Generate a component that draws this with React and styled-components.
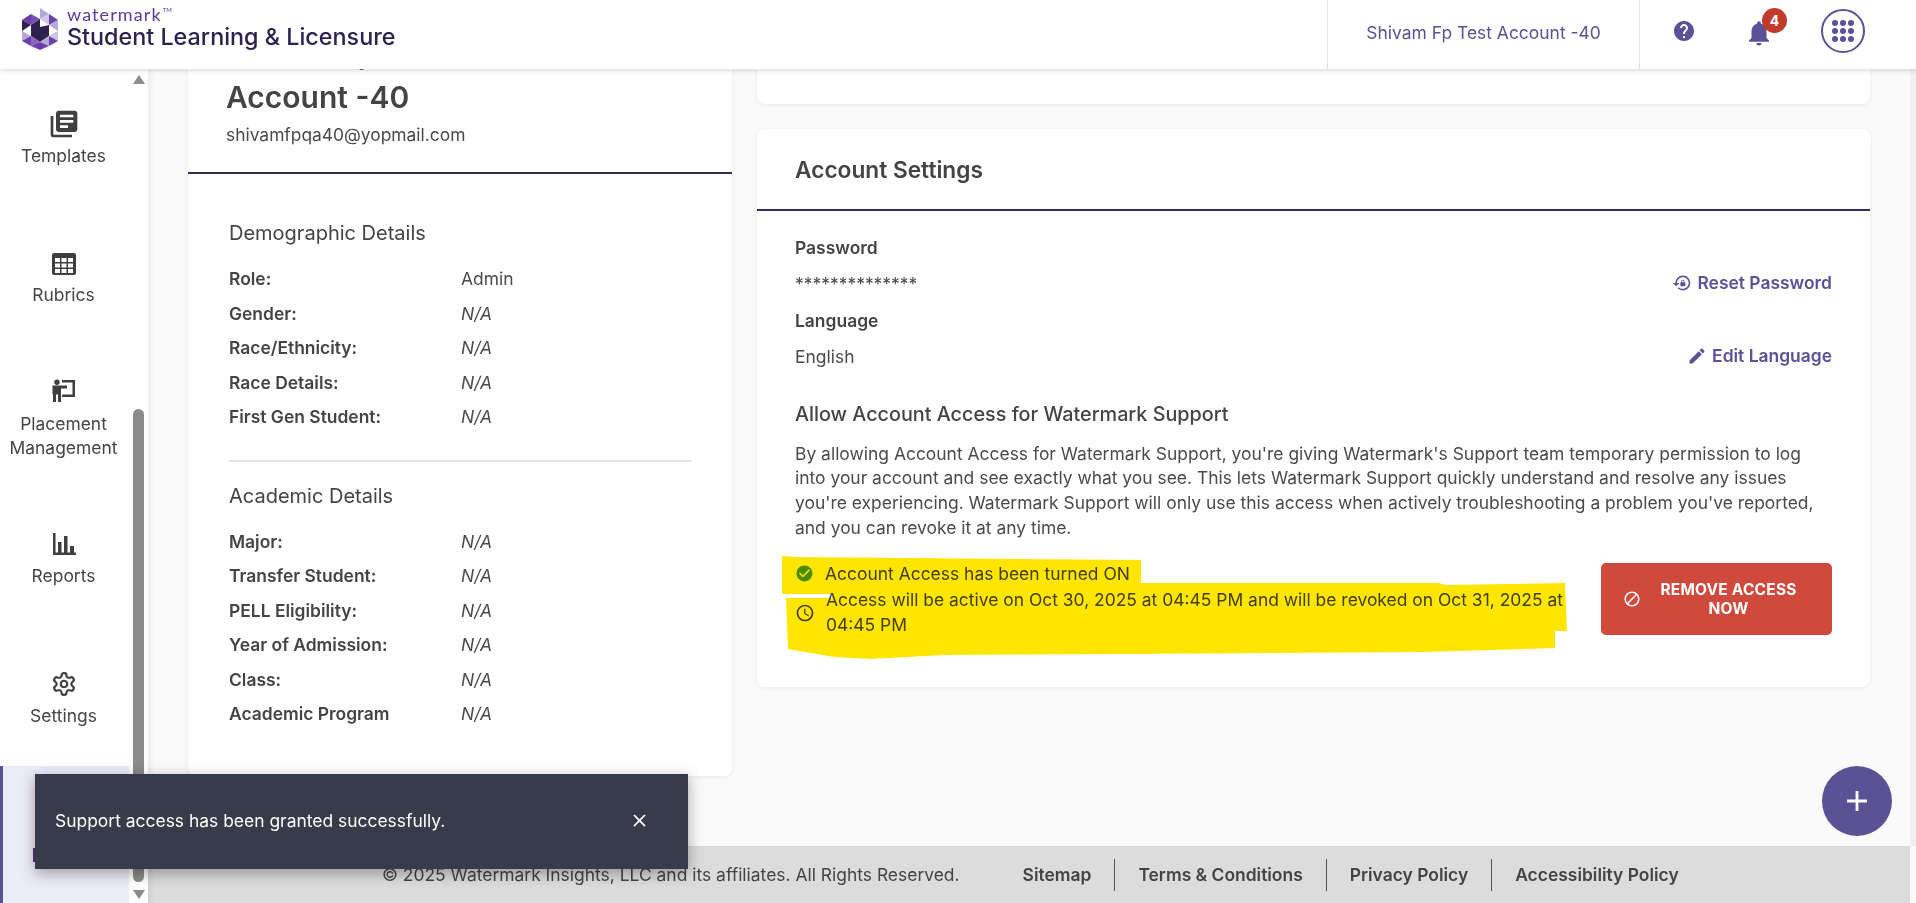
import React from "react";
import styled, { createGlobalStyle } from "styled-components";
import { MdLibraryBooks, MdHelp, MdNotifications, MdCheckCircle, MdEdit, MdBlock, MdLockReset, MdClose, MdAdd, MdAccessTime } from "react-icons/md";
import { LuSettings } from "react-icons/lu";

const Global = createGlobalStyle`
  html, body { margin: 0; padding: 0; height: 100%; overflow: hidden; background: #fafafa; }
  * { box-sizing: border-box; }
  body { font-family: Inter, "Liberation Sans", sans-serif; color: #4a4a4a; }
`;

const Page = styled.div`
  height: 903px;
  display: flex;
  flex-direction: column;
  position: relative;
  overflow: hidden;
`;

const Header = styled.header`
  height: 69px;
  flex: none;
  display: flex;
  align-items: stretch;
  background: #fff;
  box-shadow: 0 1px 5px rgba(0,0,0,.18);
  position: relative;
  z-index: 3;
`;
const Brand = styled.div`
  flex: 1;
  display: flex;
  gap: 9px;
  padding: 8px 0 0 22px;
`;
const BrandText = styled.div`
  display: flex;
  flex-direction: column;
  margin-top: -2px;
`;
const BrandTop = styled.span`
  font-family: Lato, Inter, sans-serif;
  font-size: 18px;
  line-height: 17px;
  letter-spacing: 1.1px;
  color: #5c3a9e;
  sup { font-size: 6px; line-height: 0; vertical-align: 9px; letter-spacing: 0; margin-left: 1px; }
`;
const BrandName = styled.span`
  font-size: 23.35px;
  line-height: 28px;
  font-weight: 500;
  color: #2d2150;
  white-space: nowrap;
`;
const Account = styled.div`
  width: 313px;
  border-left: 1px solid #e4e4e4;
  border-right: 1px solid #e4e4e4;
  display: flex;
  align-items: center;
  justify-content: center;
  padding-bottom: 5px;
  font-size: 17.45px;
  color: #5a5196;
  white-space: nowrap;
`;
const Tools = styled.div`
  width: 276px;
  display: flex;
  align-items: center;
  color: #5a5196;
  padding: 0 0 8px 32px;
`;
const BellWrap = styled.div`
  position: relative;
  display: flex;
  margin: 4px 0 0 48px;
`;
const Badge = styled.span`
  position: absolute;
  left: 18px;
  top: -10px;
  width: 25px;
  height: 25px;
  border-radius: 50%;
  background: #c23a2b;
  color: #fff;
  font-size: 14px;
  font-weight: 700;
  display: flex;
  align-items: center;
  justify-content: center;
`;
const AppsButton = styled.div`
  width: 44px;
  height: 44px;
  border: 2px solid #5a5196;
  border-radius: 50%;
  margin-left: 47px;
  display: flex;
  align-items: center;
  justify-content: center;
`;

const Body = styled.div`
  flex: 1;
  min-height: 0;
  display: flex;
`;
const Sidebar = styled.nav`
  width: 148px;
  flex: none;
  background: #fff;
  box-shadow: 2px 0 6px rgba(0,0,0,.08);
  display: flex;
  position: relative;
  z-index: 1;
`;
const NavList = styled.div`
  width: 129px;
  flex: none;
  display: flex;
  flex-direction: column;
  padding-top: 38.5px;
`;
const NavItem = styled.div`
  height: ${p => p.$h}px;
  flex: none;
  display: flex;
  flex-direction: column;
  align-items: center;
  text-align: center;
  padding-right: 2px;
  color: #454545;
  font-size: 17.45px;
  line-height: 24.6px;
  svg { flex: none; margin-bottom: ${p => p.$gap}px; }
`;
const ActiveNavItem = styled.div`
  height: 137px;
  flex: none;
  display: flex;
  flex-direction: column;
  background: #ecebf8;
  border-left: 3px solid #5a5196;
`;
const ActiveMark = styled.span`
  width: 10px;
  height: 14px;
  background: #4d3a80;
  margin: 82px 0 0 30px;
`;
const Track = styled.div`
  width: 19px;
  flex: none;
  display: flex;
  flex-direction: column;
  align-items: center;
  padding: 6px 0 0 0;
  background: #fff;
`;
const Arrow = styled.div`
  width: 0;
  height: 0;
  border-left: 6px solid transparent;
  border-right: 6px solid transparent;
  ${p => p.$up ? "border-bottom: 9px solid #8b8b8b;" : "border-top: 9px solid #8b8b8b;"}
`;
const Thumb = styled.div`
  width: 11px;
  height: 473px;
  background: #8b8b8b;
  border-radius: 6px;
  margin: 325px 0 8px;
`;

const Main = styled.main`
  flex: 1;
  min-width: 0;
  display: flex;
  flex-direction: column;
  background: #fafafa;
`;
const Scroll = styled.div`
  flex: 1;
  min-height: 0;
  overflow: hidden;
  display: flex;
  align-items: flex-start;
  gap: 25px;
  padding-left: 40px;
  padding-right: 46px;
`;
const Card = styled.section`
  background: #fff;
  border-radius: 8px;
  box-shadow: 0 1px 5px rgba(0,0,0,.07);
`;
const ProfileCard = styled(Card)`
  width: 544px;
  flex: none;
  margin-top: -38px;
  height: 745px;
`;
const ProfileHead = styled.div`
  height: 143px;
  padding: 0 38px;
  border-bottom: 2px solid #352a5a;
`;
const ProfileName = styled.h1`
  margin: 0;
  font-size: 30px;
  line-height: 44px;
  font-weight: 600;
  color: #444;
`;
const Email = styled.div`
  font-size: 17.4px;
  line-height: 24px;
  margin-top: 4px;
`;
const ProfileBody = styled.div`
  padding: 46px 40px 0 41px;
`;
const Group = styled.div`
  & + & {
    margin-top: 25px;
    border-top: 2px solid #e6e6e6;
    padding-top: 21px;
  }
`;
const GroupTitle = styled.h3`
  margin: 0 0 16px;
  font-size: 20px;
  line-height: 26px;
  font-weight: 400;
  color: #444;
`;
const Row = styled.div`
  display: grid;
  grid-template-columns: 232px 1fr;
  height: 34.5px;
  font-size: 17.45px;
  line-height: 34.4px;
`;
const RowLabel = styled.span`
  font-weight: 600;
  color: #444;
  white-space: nowrap;
`;
const RowValue = styled.span`
  font-style: ${p => p.$plain ? "normal" : "italic"};
`;
const RightCol = styled.div`
  flex: 1;
  min-width: 0;
  display: flex;
  flex-direction: column;
  gap: 25px;
`;
const TopCard = styled(Card)`
  height: 60px;
  margin-top: -25px;
`;
const SettingsCard = styled(Card)`
  height: 558px;
  position: relative;
`;
const SettingsHead = styled.div`
  height: 82px;
  padding: 26px 38px 0;
  border-bottom: 2px solid #352a5a;
`;
const SettingsTitle = styled.h2`
  margin: 0;
  font-size: 22.7px;
  line-height: 30px;
  font-weight: 600;
  color: #444;
`;
const SettingsBody = styled.div`
  padding: 23px 38px 0;
  font-size: 17.45px;
  position: relative;
`;
const FieldRow = styled.div`
  display: flex;
  justify-content: space-between;
  align-items: flex-end;
  height: ${p => p.$h}px;
  padding-bottom: 12px;
`;
const FieldLabel = styled.div`
  font-weight: 600;
  color: #444;
  line-height: 24px;
  margin-bottom: 12px;
`;
const FieldValue = styled.div`
  line-height: 24px;
`;
const ActionLink = styled.span`
  display: inline-flex;
  align-items: center;
  gap: 5px;
  color: #5a5196;
  font-weight: 600;
  line-height: 24px;
  margin-bottom: 1px;
`;
const SectionTitle = styled.h3`
  margin: 19.5px 0 0;
  font-size: 19.8px;
  line-height: 26px;
  font-weight: 500;
  color: #444;
`;
const Paragraph = styled.p`
  margin: 15px 0 0;
  font-size: 17.45px;
  line-height: 24.8px;
  max-width: 1030px;
`;
const AccessRow = styled.div`
  display: flex;
  justify-content: space-between;
  align-items: flex-start;
  margin-top: 21px;
`;
const Status = styled.div`
  width: 775px;
  display: flex;
  flex-direction: column;
`;
const StatusLine = styled.div`
  display: flex;
  align-items: center;
  gap: 11px;
  line-height: 24.4px;
  color: #444;
  margin-bottom: 2px;
  svg { flex: none; }
`;
const RemoveButton = styled.button`
  width: 231px;
  height: 72px;
  border: 0;
  border-radius: 5px;
  background: #cf4a3c;
  color: #fff;
  font: 700 15.5px/19px Inter, sans-serif;
  letter-spacing: .2px;
  text-transform: uppercase;
  display: flex;
  align-items: center;
  padding: 0 30px 0 22px;
  gap: 14px;
  margin-top: 1px;
  text-align: center;
  svg { flex: none; }
`;
const Highlight = styled.svg`
  position: absolute;
  left: 0;
  top: 0;
  mix-blend-mode: multiply;
  pointer-events: none;
`;
const Footer = styled.footer`
  height: 57px;
  flex: none;
  margin-right: 6px;
  background: #dcdcdc;
  display: flex;
  align-items: center;
  padding-left: 234px;
  font-size: 17.45px;
  color: #444;
  white-space: nowrap;
`;
const FooterLinks = styled.div`
  display: flex;
  align-items: center;
  margin-left: 63px;
`;
const FooterLink = styled.a`
  font-weight: 600;
  line-height: 32px;
  padding: 0 23px;
  & + & { border-left: 1px solid #555; }
  &:first-child { padding-left: 0; }
`;
const Toast = styled.div`
  position: absolute;
  left: 35px;
  top: 774px;
  width: 653px;
  height: 95px;
  background: #373b4a;
  color: #fff;
  font-size: 17.45px;
  display: flex;
  align-items: center;
  justify-content: space-between;
  padding: 0 38px 2px 20px;
  box-shadow: 0 4px 14px rgba(0,0,0,.35);
  z-index: 5;
`;
const Fab = styled.div`
  position: absolute;
  left: 1822px;
  top: 766px;
  width: 70px;
  height: 70px;
  border-radius: 50%;
  background: #5b5195;
  color: #fff;
  display: flex;
  align-items: center;
  justify-content: center;
  z-index: 4;
`;
const ScrollStrip = styled.div`
  position: absolute;
  right: 0;
  top: 69px;
  bottom: 57px;
  width: 6px;
  background: #eef0f2;
  z-index: 2;
`;

const Logo = () => (
  <svg width="36" height="42" viewBox="0 0 36 42">
    <polygon points="18,0 18,11 27,6" fill="#b6a7d8" />
    <polygon points="0,12 9,6 9,17" fill="#6b3fa8" />
    <polygon points="9,6 18,11 9,17" fill="#7a4fb5" />
    <polygon points="27,6 36,12 27,17" fill="#6b3fa8" />
    <polygon points="18,11 27,6 27,17" fill="#cfc5e4" />
    <polygon points="27,17 36,12 36,23" fill="#b6a7d8" />
    <polygon points="0,12 9,17 0,23" fill="#2d2150" />
    <polygon points="9,17 18,11 18,19 27,17 27,28 18,34 9,28" fill="#2d2150" />
    <polygon points="0,23 9,28 0,33" fill="#b6a7d8" />
    <polygon points="27,28 36,23 36,33" fill="#cfc5e4" />
    <polygon points="0,33 9,28 9,38" fill="#6b3fa8" />
    <polygon points="9,28 18,34 9,38" fill="#8a63c0" />
    <polygon points="27,28 36,33 27,38" fill="#6b3fa8" />
    <polygon points="18,34 27,28 27,38" fill="#b6a7d8" />
    <polygon points="18,34 27,38 18,42 9,38" fill="#6b3fa8" />
  </svg>
);

const Apps = () => (
  <svg width="22" height="22" viewBox="0 0 22 22" fill="#5a5196">
    {[3, 11, 19].flatMap(y => [3, 11, 19].map(x => <circle key={x + "-" + y} cx={x} cy={y} r="3" />))}
  </svg>
);

const RubricGrid = () => (
  <svg width="24" height="22" viewBox="0 0 24 22">
    <rect width="24" height="22" rx="2" fill="#3f3f3f" />
    {[3, 9.5, 16].flatMap(x => [5, 10.5, 16].map(y => <rect key={x + "-" + y} x={x} y={y} width="5" height="4" fill="#fff" />))}
  </svg>
);

const Placement = () => (
  <svg width="26" height="24" viewBox="0 0 26 24" fill="#3f3f3f">
    <circle cx="6" cy="3.2" r="2.7" />
    <path d="M1.5 6.5H16V9.5H10V23H7V15.5H5V23H2V15.5H1.5z" />
    <path d="M11 1H24V18H11V15.5H21.5V3.5H11z" />
  </svg>
);

const Bars = () => (
  <svg width="24" height="22" viewBox="0 0 24 22" fill="#3f3f3f">
    <rect x="1" y="0" width="2.5" height="22" />
    <rect x="1" y="19.5" width="23" height="2.5" />
    <rect x="6" y="9" width="3.5" height="11" />
    <rect x="12" y="3" width="3.5" height="17" />
    <rect x="18" y="13" width="4" height="7" />
  </svg>
);

const rows1 = ["Gender:", "Race/Ethnicity:", "Race Details:", "First Gen Student:"];
const rows2 = ["Major:", "Transfer Student:", "PELL Eligibility:", "Year of Admission:", "Class:", "Academic Program"];

export default function App() {
  return (
    <Page>
      <Global />
      <Header>
        <Brand>
          <Logo />
          <BrandText>
            <BrandTop>watermark<sup>TM</sup></BrandTop>
            <BrandName>Student Learning &amp; Licensure</BrandName>
          </BrandText>
        </Brand>
        <Account>Shivam Fp Test Account -40</Account>
        <Tools>
          <MdHelp size={24} />
          <BellWrap>
            <MdNotifications size={30} />
            <Badge>4</Badge>
          </BellWrap>
          <AppsButton><Apps /></AppsButton>
        </Tools>
      </Header>
      <Body>
        <Sidebar>
          <NavList>
            <NavItem $h={145.5} $gap={4}><MdLibraryBooks size={32} color="#3f3f3f" />Templates</NavItem>
            <NavItem $h={126} $gap={8}><RubricGrid />Rubrics</NavItem>
            <NavItem $h={154} $gap={8.7}><Placement />Placement<br />Management</NavItem>
            <NavItem $h={138} $gap={8.7}><Bars />Reports</NavItem>
            <NavItem $h={95} $gap={6.7}><LuSettings size={26} color="#3f3f3f" />Settings</NavItem>
            <ActiveNavItem><ActiveMark /></ActiveNavItem>
          </NavList>
          <Track>
            <Arrow $up />
            <Thumb />
            <Arrow />
          </Track>
        </Sidebar>
        <Main>
          <Scroll>
            <ProfileCard>
              <ProfileHead>
                <ProfileName>Shivam Fp Test<br />Account -40</ProfileName>
                <Email>shivamfpqa40@yopmail.com</Email>
              </ProfileHead>
              <ProfileBody>
                <Group>
                  <GroupTitle>Demographic Details</GroupTitle>
                  <Row><RowLabel>Role:</RowLabel><RowValue $plain>Admin</RowValue></Row>
                  {rows1.map(r => <Row key={r}><RowLabel>{r}</RowLabel><RowValue>N/A</RowValue></Row>)}
                </Group>
                <Group>
                  <GroupTitle>Academic Details</GroupTitle>
                  {rows2.map(r => <Row key={r}><RowLabel>{r}</RowLabel><RowValue>N/A</RowValue></Row>)}
                </Group>
              </ProfileBody>
            </ProfileCard>
            <RightCol>
              <TopCard />
              <SettingsCard>
                <SettingsHead><SettingsTitle>Account Settings</SettingsTitle></SettingsHead>
                <SettingsBody>
                  <FieldRow $h={74}>
                    <div><FieldLabel>Password</FieldLabel><FieldValue>**************</FieldValue></div>
                    <ActionLink><MdLockReset size={20} />Reset Password</ActionLink>
                  </FieldRow>
                  <FieldRow $h={73}>
                    <div><FieldLabel>Language</FieldLabel><FieldValue>English</FieldValue></div>
                    <ActionLink><MdEdit size={20} />Edit Language</ActionLink>
                  </FieldRow>
                  <SectionTitle>Allow Account Access for Watermark Support</SectionTitle>
                  <Paragraph>By allowing Account Access for Watermark Support, you're giving Watermark's Support team temporary permission to log into your account and see exactly what you see. This lets Watermark Support quickly understand and resolve any issues you're experiencing. Watermark Support will only use this access when actively troubleshooting a problem you've reported, and you can revoke it at any time.</Paragraph>
                  <AccessRow>
                    <Status>
                      <StatusLine><MdCheckCircle size={19} color="#4a9a00" />Account Access has been turned ON</StatusLine>
                      <StatusLine><MdAccessTime size={20} />Access will be active on Oct 30, 2025 at 04:45 PM and will be revoked on Oct 31, 2025 at 04:45 PM</StatusLine>
                    </Status>
                    <RemoveButton><MdBlock size={18} />Remove Access Now</RemoveButton>
                  </AccessRow>
                </SettingsBody>
                <Highlight width="1113" height="558" viewBox="0 0 1113 558">
                  <path fill="#ffe600" d="M25 427 L40 428 L384 431 L384 454 L681 454 L689 456 L808 454 L810 502 L798 502 L798 519 L667 523 L372 525 L187 526 L114 530 L77 528 L31 520 L29 469 L75 469 L75 465 L25 465 Z" />
                </Highlight>
              </SettingsCard>
            </RightCol>
          </Scroll>
          <Footer>
            © 2025 Watermark Insights, LLC and its affiliates. All Rights Reserved.
            <FooterLinks>
              <FooterLink>Sitemap</FooterLink>
              <FooterLink>Terms &amp; Conditions</FooterLink>
              <FooterLink>Privacy Policy</FooterLink>
              <FooterLink>Accessibility Policy</FooterLink>
            </FooterLinks>
          </Footer>
        </Main>
      </Body>
      <ScrollStrip />
      <Toast>
        Support access has been granted successfully.
        <MdClose size={21} />
      </Toast>
      <Fab><MdAdd size={34} /></Fab>
    </Page>
  );
}
